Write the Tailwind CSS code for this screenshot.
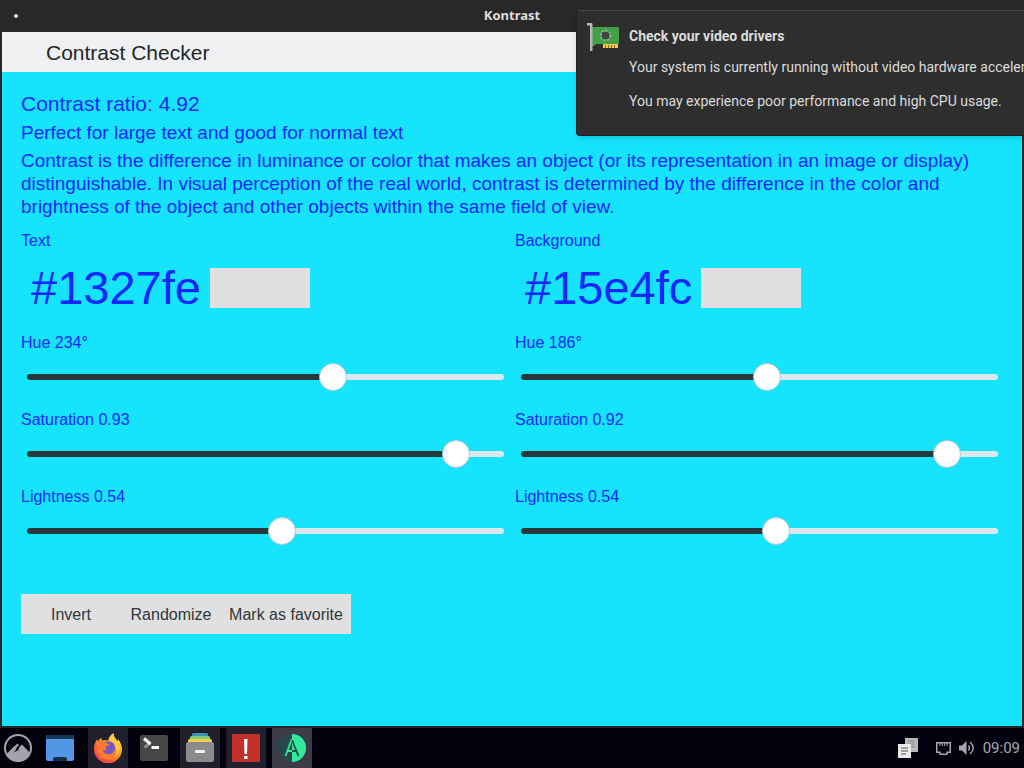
<!DOCTYPE html>
<html lang="en">
<head>
<meta charset="utf-8">
<meta name="viewport" content="width=device-width, initial-scale=1">
<title>Kontrast</title>
<script src="https://cdn.jsdelivr.net/npm/@tailwindcss/browser@4"></script>
<style>
  .slider { appearance: none; background: transparent; }
  .slider::-webkit-slider-runnable-track {
    height: 6px; border-radius: 3px;
    background: linear-gradient(to right, #263a3c var(--fill), #dbe9ee var(--fill));
  }
  .slider::-webkit-slider-thumb {
    appearance: none; width: 28px; height: 28px; margin-top: -11px; border-radius: 50%;
    background: #fff; border: 1px solid #b4c8cc;
  }
</style>
</head>
<body class="relative flex min-h-screen flex-col overflow-x-hidden bg-[#262626] font-['Liberation_Sans',Arial,sans-serif]">

  <!-- Window title bar -->
  <header class="grid h-8 grid-cols-[1fr_auto_1fr] items-center bg-[#282828] px-3.5">
    <span class="size-1 rounded-full bg-[#dcdcdc]"></span>
    <span class="font-['Noto_Sans',sans-serif] text-[13px] font-bold text-[#dedede]">Kontrast</span>
  </header>

  <div class="mx-0.5 mb-0.5 flex flex-1 flex-col bg-[#15e4fc]">
    <div class="flex h-10 items-center bg-[#eff0f1] pt-0.5 pl-11">
      <h1 class="text-[21px] leading-6 text-[#232629]">Contrast Checker</h1>
    </div>

    <main class="flex-1 px-[19px] pt-5 text-[#1327fe]">
      <h2 class="text-[21px] leading-6">Contrast ratio: 4.92</h2>
      <p class="mt-[5px] text-[19px] leading-[23px]">Perfect for large text and good for normal text</p>
      <p class="mt-[5px] text-[19px] leading-[23px]">Contrast is the difference in luminance or color that makes an object (or its representation in an image or display) distinguishable. In visual perception of the real world, contrast is determined by the difference in the color and brightness of the object and other objects within the same field of view.</p>

      <div class="mt-[13px] grid grid-cols-2 gap-1.5 text-base leading-5">
        <section>
          <label for="text-color" class="block">Text</label>
          <div class="mt-2.5 flex h-[54px] items-center">
            <input id="text-color" type="text" value="#1327fe" class="field-sizing-content bg-transparent pr-[9px] pl-2.5 text-[47px] leading-[54px] outline-none">
            <button type="button" aria-label="Pick text color" class="h-10 w-[100px] bg-[#e0e0e0]"></button>
          </div>
          <div class="mt-[18px] flex flex-col gap-[19px]">
            <div class="flex flex-col gap-2.5">
              <label for="text-hue">Hue 234°</label>
              <input id="text-hue" type="range" min="0" max="360" value="234" style="--fill:65%" class="slider mr-[5px] ml-1.5 h-7">
            </div>
            <div class="flex flex-col gap-2.5">
              <label for="text-sat">Saturation 0.93</label>
              <input id="text-sat" type="range" min="0" max="1" step="0.001" value="0.925" style="--fill:92%" class="slider mr-[5px] ml-1.5 h-7">
            </div>
            <div class="flex flex-col gap-2.5">
              <label for="text-light">Lightness 0.54</label>
              <input id="text-light" type="range" min="0" max="1" step="0.001" value="0.537" style="--fill:54%" class="slider mr-[5px] ml-1.5 h-7">
            </div>
          </div>
        </section>
        <section>
          <label for="bg-color" class="block">Background</label>
          <div class="mt-2.5 flex h-[54px] items-center">
            <input id="bg-color" type="text" value="#15e4fc" class="field-sizing-content bg-transparent pr-[9px] pl-2.5 text-[47px] leading-[54px] outline-none">
            <button type="button" aria-label="Pick background color" class="h-10 w-[100px] bg-[#e0e0e0]"></button>
          </div>
          <div class="mt-[18px] flex flex-col gap-[19px]">
            <div class="flex flex-col gap-2.5">
              <label for="bg-hue">Hue 186°</label>
              <input id="bg-hue" type="range" min="0" max="360" value="186" style="--fill:52%" class="slider mr-[5px] ml-1.5 h-7">
            </div>
            <div class="flex flex-col gap-2.5">
              <label for="bg-sat">Saturation 0.92</label>
              <input id="bg-sat" type="range" min="0" max="1" step="0.001" value="0.917" style="--fill:91%" class="slider mr-[5px] ml-1.5 h-7">
            </div>
            <div class="flex flex-col gap-2.5">
              <label for="bg-light">Lightness 0.54</label>
              <input id="bg-light" type="range" min="0" max="1" step="0.001" value="0.537" style="--fill:54%" class="slider mr-[5px] ml-1.5 h-7">
            </div>
          </div>
        </section>
      </div>

      <div class="mt-[49px] flex text-base text-[#31363b]">
        <button type="button" class="h-10 w-[100px] bg-[#e0e0e0] pt-0.5">Invert</button>
        <button type="button" class="h-10 w-[100px] bg-[#e0e0e0] pt-0.5">Randomize</button>
        <button type="button" class="h-10 w-[130px] bg-[#e0e0e0] pt-0.5">Mark as favorite</button>
      </div>
    </main>
  </div>

  <!-- Desktop panel -->
  <footer class="flex h-10 items-center justify-between bg-[#02020f]">
    <nav class="flex h-10 items-center gap-1.5" aria-label="Panel">
      <button type="button" aria-label="Menu" class="flex h-10 w-9 items-center justify-center">
        <svg class="size-7" viewBox="0 0 28 28"><circle cx="14" cy="14" r="14" fill="#a3a3ab"/><circle cx="14" cy="14" r="12" fill="#06060f"/><path d="M2.500 20 10 12.500 13 15.500 18 10.500 26 19A13 13 0 0 1 4.500 24Z" fill="#a3a3ab"/><path d="M8 14.500 13.500 9.500 15 11 10.500 16Z" fill="#a3a3ab"/><path d="M9.500 18.500 15.500 11.500 14.500 16Z" fill="#06060f"/></svg>
      </button>
      <button type="button" aria-label="Show desktop" class="flex size-10 items-center justify-start pl-1">
        <svg class="size-7" viewBox="0 0 28 28"><path d="M0 3a2 2 0 0 1 2-2h24a2 2 0 0 1 2 2v22a2 2 0 0 1-2 2H2a2 2 0 0 1-2-2Z" fill="#5296e6"/><path d="M0 5V3a2 2 0 0 1 2-2h24a2 2 0 0 1 2 2v2Z" fill="#173657"/><path d="M7 27v-2a2 2 0 0 1 2-2h10a2 2 0 0 1 2 2v2Z" fill="#152e4d"/></svg>
      </button>
      <button type="button" aria-label="Firefox" class="flex size-10 items-center justify-center bg-[#20202c]">
        <svg class="h-[30px] w-7" viewBox="0 0 28 30">
          <defs><linearGradient id="fox" x1="0.85" y1="0.1" x2="0.2" y2="0.95"><stop offset="0" stop-color="#ffe14a"/><stop offset=".4" stop-color="#ff9a2b"/><stop offset=".75" stop-color="#ff5b37"/><stop offset="1" stop-color="#f5405a"/></linearGradient></defs>
          <path d="M3 6.500C3.600 7.200 4 8 4.500 8.400 5 6.500 6 5.500 7.200 4.700 7.200 6.200 8 7 9 7.600 11 7 12.500 7.200 14.500 7.600 14.800 4.500 16.500 2 19.500 0.300 19.300 3.500 21.500 5 23.500 8 24 7.800 24 7 24 6.200 26.500 9 28 12.500 28 16A14 14 0 0 1 0 16.500C0 12.500 1 9 3 6.500Z" fill="url(#fox)"/>
          <circle cx="14.500" cy="15" r="6.800" fill="#7a55c6"/>
          <path d="M4 9C7 7 10 7.500 11.500 10L15.500 11.200C15 12.800 12 12.700 11 14 10.500 15 12 16.300 13.500 16 12 17.700 9.500 17.300 8.500 16.500 9.500 20 12 21.500 15 21.300 19 21 21.300 18 21.300 14.500 25 20 20 26.500 13.500 26.500 6.500 26.500 2.500 21 3 15Z" fill="#ff7d2e"/>
          <path d="M19.500.3C16.500 2 14.800 4.500 14.500 7.600 18 8 21 10.500 21.400 14.500 23.500 18.500 22 23 18.500 25.500 25 23 27.500 16 24 10 22.500 6.800 19.500 4.500 19.500.3Z" fill="#ffcb3c"/>
        </svg>
      </button>
      <button type="button" aria-label="Terminal" class="flex size-10 items-center justify-center">
        <svg class="h-[26px] w-7" viewBox="0 0 28 26"><rect width="28" height="26" rx="2" fill="#464646"/><path d="M10 8 4.500 12.500" stroke="#8b8b8b" stroke-width="3"/><path d="M4 3.500 10.500 9" stroke="#f4f4f4" stroke-width="3"/><path d="M11.500 12.500H19" stroke="#f4f4f4" stroke-width="3"/></svg>
      </button>
      <button type="button" aria-label="Files" class="flex size-10 items-center justify-center bg-[#20202c]">
        <svg class="h-[30px] w-7 -translate-y-px" viewBox="0 0 28 30"><path d="M6 4V2.500A1.500 1.500 0 0 1 7.500 1h13A1.500 1.500 0 0 1 22 2.500V4Z" fill="#3a91b5"/><path d="M4 7V5.500A1.500 1.500 0 0 1 5.500 4h17A1.500 1.500 0 0 1 24 5.500V7Z" fill="#86c887"/><path d="M2 11V8.500A1.500 1.500 0 0 1 3.500 7h21A1.500 1.500 0 0 1 26 8.500V11Z" fill="#f3cf45"/><path d="M0 12a2 2 0 0 1 2-2h24a2 2 0 0 1 2 2v16a2 2 0 0 1-2 2H2a2 2 0 0 1-2-2Z" fill="#8b8b8d"/><rect x="9" y="18" width="10" height="3" rx="1" fill="#f1f1f1"/></svg>
      </button>
      <button type="button" aria-label="System reports" class="flex size-10 items-center justify-center bg-[#20202c]">
        <svg class="size-7" viewBox="0 0 28 28"><rect width="28" height="28" rx="1" fill="#c1302a"/><path d="M12 5h3.500L15 20h-2.500Z" fill="#fff"/><rect x="12" y="22" width="3.500" height="3" fill="#fff"/></svg>
      </button>
      <button type="button" aria-label="Kontrast" class="flex size-10 items-center justify-center bg-[#3b3b47]">
        <svg class="size-7" viewBox="0 0 28 28"><circle cx="14" cy="14" r="14" fill="#284850"/><path d="M14 0a14 14 0 0 1 0 28Z" fill="#35e99b"/><path d="M7.500 22 13.500 6H14M9 17H14" fill="none" stroke="#35e99b" stroke-width="1.800"/><path d="M14 6 20.500 22M14 17h4.500" fill="none" stroke="#15524e" stroke-width="1.800"/></svg>
      </button>
    </nav>
    <div class="flex items-center gap-2 pr-1 text-[#a8a8b0]">
      <svg class="mr-2.5 h-5 w-5" viewBox="0 0 20 20"><path d="M7 0h13v14H7Z" fill="#b9b9bc"/><path d="M10 3h7M10 6h7M13 9h4" stroke="#83838a"/><path d="M0 6h13v14H0Z" fill="#e9e9e9"/><path d="M3 10h7M3 13h7M3 16h5" stroke="#55555b"/></svg>
      <svg class="h-[13px] w-[15px]" viewBox="0 0 15 13" fill="none" stroke="currentColor" stroke-width="1.500"><path d="M.75.75h13.500v9.500H11v2H4v-2H.75Z"/><path d="M4 1v3M6.300 1v3M8.700 1v3M11 1v3" stroke-width="1"/></svg>
      <svg class="h-[14px] w-4" viewBox="0 0 16 14"><path d="M0 4.500h3L7.500 0v14L3 9.500H0Z" fill="currentColor"/><path d="M9.500 4.500q2 2.500 0 5" fill="none" stroke="currentColor" stroke-width="1.400"/><path d="M11 1q6.500 6 0 12" fill="none" stroke="currentColor" stroke-width="1.400"/></svg>
      <time class="font-[Roboto,sans-serif] text-[15px]">09:09</time>
    </div>
  </footer>

  <!-- Notification over the window -->
  <aside role="alert" class="absolute top-2.5 right-0 flex h-[126px] w-[448px] gap-[9px] overflow-hidden rounded-l border border-r-0 border-[#202020] border-t-[#484848] bg-[#2e2e2e] pt-3 pl-2.5 font-[Roboto,sans-serif] text-sm leading-[17px] text-[#dcdcdc] shadow-md">
    <svg class="h-7 w-[33px] shrink-0" viewBox="0 0 33 28"><path d="M5 4H31a1 1 0 0 1 1 1V20a1 1 0 0 1-1 1H9l-2 2H5Z" fill="#43a047"/><path d="M16 21h15v4H16Z" fill="#fbc847"/><path d="M18.500 22v3M21.500 22v3M24.500 22v3M27.500 22v3" stroke="#7d6935"/><path d="M0 0h4.500a1 1 0 0 1 1 1v27H3V2.500H0Z" fill="#b7b7b7"/><circle cx="18.500" cy="12.500" r="5" fill="none" stroke="#a8b5a8" stroke-width="1.600" stroke-dasharray="2 1.800"/><rect x="15" y="9" width="7" height="7" rx="1.500" fill="#424242"/></svg>
    <div class="pt-[5px] whitespace-nowrap">
      <strong class="block font-bold">Check your video drivers</strong>
      <p class="mt-3.5">Your system is currently running without video hardware acceleration.</p>
      <p class="mt-[17px]">You may experience poor performance and high CPU usage.</p>
    </div>
  </aside>
</body>
</html>
